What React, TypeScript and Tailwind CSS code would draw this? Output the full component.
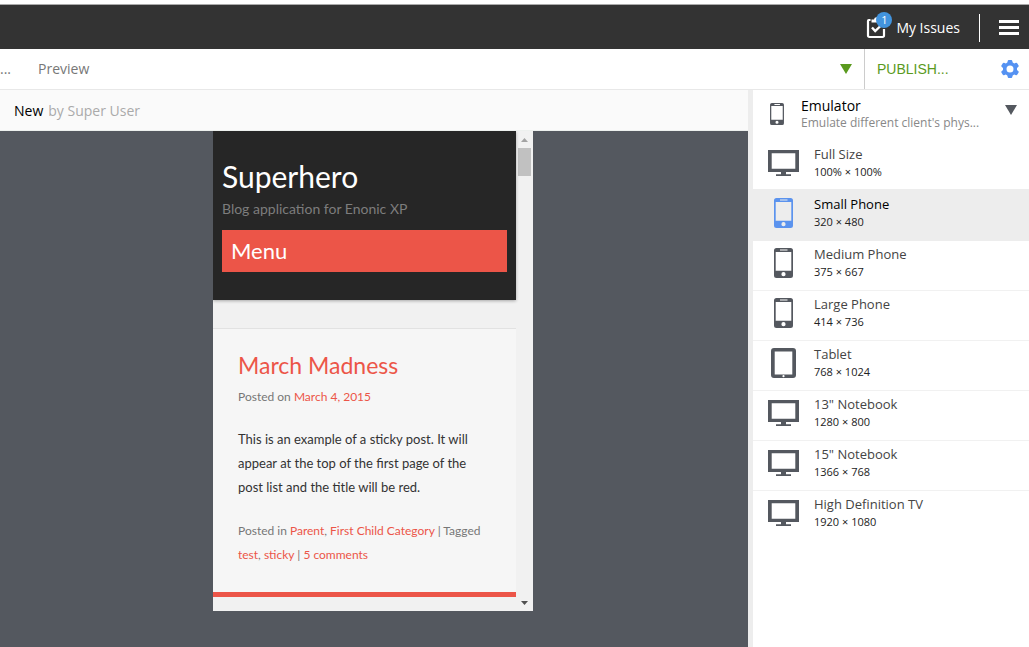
import { useState } from "react";

type IconKind = "monitor" | "phone" | "tablet";

const devices: { name: string; size: string; icon: IconKind }[] = [
  { name: "Full Size", size: "100% × 100%", icon: "monitor" },
  { name: "Small Phone", size: "320 × 480", icon: "phone" },
  { name: "Medium Phone", size: "375 × 667", icon: "phone" },
  { name: "Large Phone", size: "414 × 736", icon: "phone" },
  { name: "Tablet", size: "768 × 1024", icon: "tablet" },
  { name: '13" Notebook', size: "1280 × 800", icon: "monitor" },
  { name: '15" Notebook', size: "1366 × 768", icon: "monitor" },
  { name: "High Definition TV", size: "1920 × 1080", icon: "monitor" },
];

function PhoneIcon({ className }: { className: string }) {
  return (
    <svg viewBox="0 0 19 30" className={className} fill="currentColor" aria-hidden="true">
      <path
        fillRule="evenodd"
        d="M2.5 0H16.5A2.5 2.5 0 0 1 19 2.5V27.5A2.5 2.5 0 0 1 16.5 30H2.5A2.5 2.5 0 0 1 0 27.5V2.5A2.5 2.5 0 0 1 2.5 0ZM1.7 4V22.7H17.3V4ZM6 1.5V2.6H13.5V1.5ZM9.5 24.1A2.1 2.1 0 1 0 9.5 28.3A2.1 2.1 0 1 0 9.5 24.1Z"
      />
    </svg>
  );
}

function DeviceIcon({ kind }: { kind: IconKind }) {
  if (kind === "phone") return <PhoneIcon className="h-[30px] w-[19px]" />;
  if (kind === "tablet")
    return (
      <svg viewBox="0 0 25 30" className="h-[30px] w-[25px]" fill="currentColor" aria-hidden="true">
        <path
          fillRule="evenodd"
          d="M3 0H22A3 3 0 0 1 25 3V27A3 3 0 0 1 22 30H3A3 3 0 0 1 0 27V3A3 3 0 0 1 3 0ZM3.7 3.5V26.5H21.3V3.5ZM12.5 27.1A1.1 1.1 0 1 0 12.5 29.3A1.1 1.1 0 1 0 12.5 27.1Z"
        />
      </svg>
    );
  return (
    <svg viewBox="0 0 31 26" className="h-[26px] w-[31px]" fill="currentColor" aria-hidden="true">
      <path fillRule="evenodd" d="M0 0H31V22H18V24.2H23V26H8V24.2H13V22H0ZM3.7 3.3V18.7H27.3V3.3Z" />
    </svg>
  );
}

function GearIcon() {
  return (
    <svg viewBox="0 0 18 18" className="size-[18px]" fill="#5592f2" aria-hidden="true">
      <path
        fillRule="evenodd"
        d="M7.6 0H10.4Q11 0 11.2 0.8L11.7 2.6L13.2 3.4L15 2.8Q15.8 2.6 16.2 3.2L17.6 5.6Q17.9 6.3 17.4 6.8L16 8.1V9.9L17.4 11.2Q17.9 11.7 17.6 12.4L16.2 14.8Q15.8 15.4 15 15.2L13.2 14.6L11.7 15.4L11.2 17.2Q11 18 10.4 18H7.6Q7 18 6.8 17.2L6.3 15.4L4.8 14.6L3 15.2Q2.2 15.4 1.8 14.8L0.4 12.4Q0.1 11.7 0.6 11.2L2 9.9V8.1L0.6 6.8Q0.1 6.3 0.4 5.6L1.8 3.2Q2.2 2.6 3 2.8L4.8 3.4L6.3 2.6L6.8 0.8Q7 0 7.6 0ZM9 5.5A3.5 3.5 0 1 0 9 12.5A3.5 3.5 0 1 0 9 5.5Z"
      />
    </svg>
  );
}

function Triangle({ className }: { className: string }) {
  return (
    <svg viewBox="0 0 12 10" preserveAspectRatio="none" className={className} fill="currentColor" aria-hidden="true">
      <path d="M0 0H12L6 10Z" />
    </svg>
  );
}

function TopBar() {
  return (
    <header className="mt-1 flex h-[45px] shrink-0 items-center justify-end border-t border-[#aaa] bg-[#333] pt-px text-white">
      <button type="button" className="flex items-center text-sm">
        <span className="relative mr-2 flex h-6 w-[22px] items-center">
          <svg viewBox="0 0 22 24" className="h-6 w-[22px]" fill="none" stroke="white" aria-hidden="true">
            <path strokeWidth="2.2" d="M4.5 4H2.9A1 1 0 0 0 2 5V19.5A1.4 1.4 0 0 0 3.4 21H16.6A1.4 1.4 0 0 0 18 19.5V13" />
            <path fill="white" stroke="none" d="M5.5 3.5H8Q8.3 1.3 10.5 1.3H13V6.5H5.5Z" />
            <path strokeWidth="2.4" d="M6 11.5L9.2 15L14.5 10" />
          </svg>
          <span className="absolute -top-1 left-[10px] flex size-4 items-center justify-center rounded-full bg-[#4294de] text-[11px] leading-4">
            1
          </span>
        </span>
        My Issues
      </button>
      <span className="ml-[19px] h-7 w-px bg-white" />
      <button type="button" aria-label="Menu" className="mr-[10px] ml-[19px] flex w-5 flex-col gap-[3px]">
        <span className="h-[3px] bg-white" />
        <span className="h-[3px] bg-white" />
        <span className="h-[3px] bg-white" />
      </button>
    </header>
  );
}

function Toolbar() {
  return (
    <div className="flex h-[41px] shrink-0 items-center border-b border-[#e8e8e8] bg-white text-sm text-[#777]">
      <button type="button" aria-label="More actions" className="w-[38px] text-left">
        ...
      </button>
      <button type="button">Preview</button>
      <button type="button" aria-label="Publish options" className="mr-3 ml-auto text-[#5a9a1e]">
        <Triangle className="h-[10px] w-3" />
      </button>
      <div className="flex h-full w-[165px] items-center justify-between border-l border-[#ccc] pr-[10px] pl-3">
        <button type="button" className="font-['Liberation_Sans',Arial,sans-serif] text-[#5a9a1e]">
          PUBLISH...
        </button>
        <button type="button" aria-label="Settings">
          <GearIcon />
        </button>
      </div>
    </div>
  );
}

function BlogLink({ children }: { children: string }) {
  return (
    <a href="#" className="text-[#ec5548]">
      {children}
    </a>
  );
}

function BlogPreview() {
  return (
    <div className="flex h-[480px] w-80 overflow-hidden bg-[#f1f1f1] font-['Lato',sans-serif]">
      <div className="flex-1">
        <div className="relative h-[169px] bg-[#262626] px-[9px] pt-6 shadow-[0_1px_3px_rgba(0,0,0,0.3)]">
          <h1 className="text-3xl leading-[42px] text-white">Superhero</h1>
          <p className="text-sm leading-6 text-[#7d7d7d]">Blog application for Enonic XP</p>
          <button
            type="button"
            className="mt-[9px] block h-[42px] w-full bg-[#ec5548] px-[9px] pb-0.5 text-left text-[22px] text-white"
          >
            Menu
          </button>
        </div>
        <article className="mt-7 border-t border-b-[5px] border-t-[#e2e2e2] border-b-[#ec5548] bg-[#f6f6f6] px-[25px] pt-[18px] pb-[25px] text-[#333]">
          <h2 className="mb-0.5 text-[23px] leading-9 text-[#ec5548]">March Madness</h2>
          <p className="text-xs leading-6 text-[#777]">
            Posted on <BlogLink>March 4, 2015</BlogLink>
          </p>
          <p className="mt-[18px] text-[13px] leading-6">
            This is an example of a sticky post. It will appear at the top of the first page of the post list and the
            title will be red.
          </p>
          <p className="mt-5 text-xs leading-6 text-[#777]">
            Posted in <BlogLink>Parent</BlogLink>, <BlogLink>First Child Category</BlogLink> | Tagged{" "}
            <BlogLink>test</BlogLink>, <BlogLink>sticky</BlogLink> | <BlogLink>5 comments</BlogLink>
          </p>
        </article>
      </div>
      <div className="flex w-[17px] flex-col items-center bg-[#f1f1f1]">
        <button type="button" aria-label="Scroll up" className="flex h-[17px] items-center text-[#a3a3a3]">
          <Triangle className="h-1 w-[7px] rotate-180" />
        </button>
        <div className="h-7 w-[13px] bg-[#c1c1c1]" />
        <button type="button" aria-label="Scroll down" className="mt-auto flex h-[17px] items-center text-[#505050]">
          <Triangle className="h-1 w-[7px]" />
        </button>
      </div>
    </div>
  );
}

function EmulatorPanel() {
  const [selected, setSelected] = useState("Small Phone");
  return (
    <aside className="w-[281px] shrink-0 border-l-[5px] border-[#ededed] bg-white">
      <button type="button" className="flex h-[51px] w-full items-start pt-[6px] text-left text-[#54585f]">
        <span className="flex w-12 justify-center pt-[7px]">
          <PhoneIcon className="h-[22px] w-[14px]" />
        </span>
        <span className="flex-1">
          <span className="block text-sm leading-5 text-black">Emulator</span>
          <span className="block text-xs leading-[14px] text-[#888]">Emulate different client's phys...</span>
        </span>
        <Triangle className="mt-[9px] mr-3 h-[10px] w-3" />
      </button>
      <ul>
        {devices.map(({ name, size, icon }) => {
          const active = name === selected;
          return (
            <li key={name} className="border-b border-[#f1f1f1] last:border-transparent">
              <button
                type="button"
                aria-pressed={active}
                onClick={() => setSelected(name)}
                className={
                  active
                    ? "flex h-[49px] w-full bg-[#ededed] text-left text-[#5b93ee] shadow-[0_-2px_0_#ededed,0_1px_0_#ededed]"
                    : "flex h-[49px] w-full text-left text-[#54585f]"
                }
              >
                <span className="flex h-11 w-[61px] items-center justify-center">
                  <DeviceIcon kind={icon} />
                </span>
                <span className="pt-[3px]">
                  <span className={active ? "block text-[13px] leading-5 text-black" : "block text-[13px] leading-5 text-[#444]"}>
                    {name}
                  </span>
                  <span className="block text-[11px] leading-[15px] text-[#222]">{size}</span>
                </span>
              </button>
            </li>
          );
        })}
      </ul>
    </aside>
  );
}

export default function App() {
  return (
    <div className="flex min-h-screen flex-col bg-white font-['Open_Sans',sans-serif]">
      <TopBar />
      <Toolbar />
      <div className="flex flex-1">
        <main className="flex flex-1 flex-col">
          <div className="flex h-[41px] items-center gap-[5px] border-b border-[#edf0ee] bg-[#fafafa] px-[14px] pt-px text-sm">
            <span className="text-black">New</span>
            <span className="text-[#aaa]">by Super User</span>
          </div>
          <div className="flex flex-1 items-start justify-center bg-[#54585f] pr-0.5">
            <BlogPreview />
          </div>
        </main>
        <EmulatorPanel />
      </div>
    </div>
  );
}
